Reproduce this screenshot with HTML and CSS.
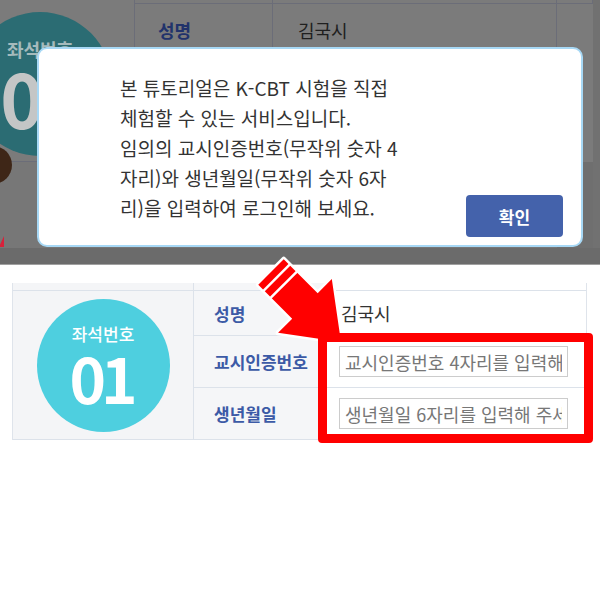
FILE: index.html
```html
<!DOCTYPE html>
<html lang="ko">
<head>
<meta charset="utf-8">
<title>K-CBT 튜토리얼</title>
<link rel="stylesheet" href="styles.css">
</head>
<body>
<section class="shot">
  <div class="under">
    <div class="u-seat">
      <div class="u-circle">
        <span class="u-circle-label">좌석번호</span>
        <span class="u-circle-num">01</span>
      </div>
    </div>
    <div class="u-stub"></div>
    <div class="u-stub"></div>
    <div class="u-stub u-stub-last"></div>
    <div class="u-label">성명</div>
    <div class="u-value">김국시</div>
    <div class="u-extra"></div>
    <div class="u-seat-low">
      <div class="u-avatar"></div>
      <div class="u-mark"></div>
    </div>
    <div class="u-low"></div>
    <div class="u-low u-low-right"></div>
    <div class="u-edge"></div>
  </div>
  <div class="u-foot"></div>
  <div class="modal">
    <p class="modal-text">본 튜토리얼은 K-CBT 시험을 직접<br>체험할 수 있는 서비스입니다.<br>임의의 교시인증번호(무작위 숫자 4<br>자리)와 생년월일(무작위 숫자 6자<br>리)을 입력하여 로그인해 보세요.</p>
    <button class="modal-btn" type="button">확인</button>
  </div>
</section>
<section class="login">
  <div class="table">
    <div class="stub stub-seat"></div>
    <div class="stub stub-label"></div>
    <div class="stub stub-value"></div>
    <div class="seat">
      <div class="seat-circle">
        <span class="seat-label">좌석번호</span>
        <span class="seat-num">01</span>
      </div>
    </div>
    <div class="label">성명</div>
    <div class="value"><span class="name">김국시</span></div>
    <div class="label">교시인증번호</div>
    <div class="value"><input class="field" type="text" placeholder="교시인증번호 4자리를 입력해 주세요."></div>
    <div class="label label-last">생년월일</div>
    <div class="value value-last"><input class="field" type="text" placeholder="생년월일 6자리를 입력해 주세요."></div>
  </div>
  <svg class="arrow" width="120" height="120" viewBox="0 0 120 120">
    <g transform="translate(31 32) rotate(45)">
      <polygon points="0,-18 48,-18 48,-38 99,0 48,38 48,18 0,18" fill="#ff0000" stroke="#ffffff" stroke-width="5" stroke-linejoin="round" paint-order="stroke"/>
      <line x1="8" y1="-19" x2="8" y2="19" stroke="#ffffff" stroke-width="2.5"/>
      <line x1="18" y1="-19" x2="18" y2="19" stroke="#ffffff" stroke-width="2.5"/>
    </g>
  </svg>
  <div class="highlight"></div>
</section>
</body>
</html>
```
FILE: styles.css
```css
* { box-sizing: border-box; }

html, body {
  margin: 0;
  padding: 0;
  background: #ffffff;
  font-family: "Noto Sans CJK KR", "Noto Sans", sans-serif;
}

body {
  width: 600px;
  height: 600px;
  overflow: hidden;
}

/* ---------- dimmed screenshot with the dialog ---------- */
.shot {
  position: relative;
  height: 264px;
  overflow: hidden;
  background: #7b7b7b;
}

.under {
  display: grid;
  grid-template-columns: 135px 138px 284px 36px 7px;
  grid-template-rows: 4px 158px 86px;
  height: 248px;
}

.u-seat {
  grid-column: 1;
  grid-row: 1 / 3;
  border-right: 1px solid #6b6d78;
  border-bottom: 1px solid #6b6d78;
}

.u-circle {
  width: 144px;
  height: 144px;
  margin: 12px 0 0 -32px;
  border-radius: 50%;
  background: #2b6c73;
  display: flex;
  flex-direction: column;
  align-items: center;
  padding-top: 26px;
  color: #b3c3c5;
}

.u-circle-label {
  font-size: 18px;
  font-weight: 700;
  line-height: 22px;
  opacity: 0.9;
}

.u-circle-num {
  font-size: 74px;
  font-weight: 700;
  line-height: 62px;
  margin-top: 6px;
  color: #c4c6c6;
  letter-spacing: -4px;
}

.u-stub {
  grid-row: 1;
  border-bottom: 1px solid #6b6d78;
  border-right: 1px solid #6b6d78;
}

.u-label {
  grid-column: 2;
  grid-row: 2;
  border-right: 1px solid #6b6d78;
  padding: 13px 0 0 23px;
  font-size: 18px;
  font-weight: 700;
  color: #21336b;
}

.u-value {
  grid-column: 3;
  grid-row: 2;
  border-right: 1px solid #6b6d78;
  padding: 13px 0 0 25px;
  font-size: 18px;
  color: #1f1f1f;
}

.u-extra {
  grid-column: 4;
  grid-row: 2;
}

.u-edge {
  grid-column: 5;
  grid-row: 1 / 4;
  background: #717171;
}

.u-seat-low {
  grid-column: 1;
  grid-row: 3;
  background: #777777;
  display: flex;
  flex-direction: column;
}

.u-avatar {
  width: 38px;
  height: 38px;
  margin: -16px 0 0 -26px;
  border-radius: 50%;
  background: #3e2617;
}

.u-mark {
  width: 0;
  height: 0;
  margin-top: 52px;
  margin-left: -1px;
  border-left: 5px solid transparent;
  border-bottom: 11px solid #d9213a;
}

.u-low {
  grid-column: 2 / 4;
  grid-row: 3;
  background: #777777;
}

.u-low-right {
  grid-column: 4;
  background: #6f6f6f;
}

.u-foot {
  height: 16px;
  background: #6b6b6b;
}

.modal {
  position: absolute;
  left: 37px;
  top: 47px;
  width: 546px;
  height: 200px;
  border: 2px solid #a7d8f5;
  border-radius: 10px;
  background: #ffffff;
  display: flex;
  padding: 24px 18px 8px 81px;
}

.modal-text {
  flex: 1;
  margin: 0;
  font-size: 19px;
  line-height: 30px;
  color: #333333;
  white-space: nowrap;
}

.modal-btn {
  align-self: flex-end;
  flex: 0 0 97px;
  width: 97px;
  height: 42px;
  border: none;
  border-radius: 4px;
  background: #4462ab;
  color: #ffffff;
  font-family: inherit;
  font-size: 17px;
  font-weight: 700;
  padding: 0;
}

/* ---------- login table ---------- */
.login {
  position: relative;
  height: 336px;
  border-top: 1px solid #a0a0a0;
  padding: 18px 0 0 12px;
}

.table {
  width: 575px;
  display: grid;
  grid-template-columns: 181px 133px 1fr;
  grid-template-rows: 8px 45px 52px 52px;
  border-left: 1px solid #dfe4eb;
  border-right: 1px solid #dfe4eb;
}

.stub {
  border-bottom: 1px solid #dce2ea;
}

.stub-seat {
  background: #f4f5f7;
  border-right: 1px solid #dce2ea;
}

.stub-label {
  background: #f5f6f8;
  border-right: 1px solid #dce2ea;
}

.stub-value { background: #ffffff; }

.seat {
  grid-column: 1;
  grid-row: 2 / 5;
  background: #f4f5f7;
  border-right: 1px solid #dce2ea;
  border-bottom: 1px solid #dce2ea;
  display: flex;
  align-items: center;
  justify-content: center;
}

.seat-circle {
  width: 133px;
  height: 133px;
  border-radius: 50%;
  background: #4ecfdf;
  color: #ffffff;
  display: flex;
  flex-direction: column;
  align-items: center;
  padding-top: 25px;
}

.seat-label {
  font-size: 17px;
  font-weight: 500;
  line-height: 20px;
}

.seat-num {
  font-size: 62px;
  font-weight: 700;
  line-height: 52px;
  letter-spacing: -5px;
  margin-top: 7px;
  padding-right: 4px;
}

.label {
  background: #f5f6f8;
  border-right: 1px solid #dce2ea;
  border-bottom: 1px solid #dce2ea;
  display: flex;
  align-items: center;
  padding-left: 20px;
  font-size: 17px;
  font-weight: 700;
  color: #3c5aa6;
}

.value {
  background: #ffffff;
  border-bottom: 1px solid #dce2ea;
  display: flex;
  align-items: center;
  padding-left: 12px;
}

.name {
  padding-left: 2px;
  font-size: 18px;
  color: #333333;
}

.field {
  width: 229px;
  height: 31px;
  border: 1px solid #cccccc;
  border-radius: 0;
  padding: 0 5px;
  font-family: inherit;
  font-size: 18px;
  color: #333333;
  background: #ffffff;
}

.field::placeholder {
  color: #777777;
  opacity: 1;
}

.arrow {
  position: absolute;
  left: 240px;
  top: -25px;
  overflow: visible;
}

.highlight {
  position: absolute;
  left: 318px;
  top: 68px;
  width: 275px;
  height: 110px;
  border: 9px solid #ff0000;
  border-radius: 4px;
}
```
